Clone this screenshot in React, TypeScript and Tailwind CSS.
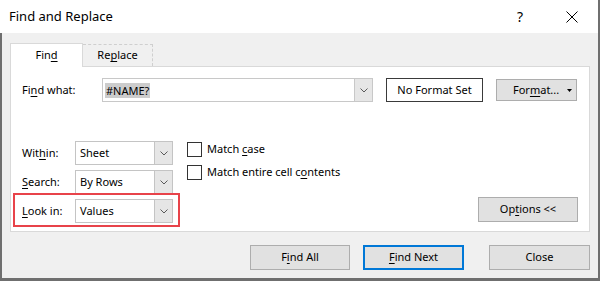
import React from "react";

const font = { fontFamily: '"Noto Sans", "Open Sans", sans-serif' };

function Chevron() {
  return (
    <svg width="8" height="5" viewBox="0 0 8 5" className="block">
      <polyline points="0.5,0.5 4,4 7.5,0.5" fill="none" stroke="#5a5a5a" strokeWidth="1" />
    </svg>
  );
}

function Select({ value, w }: { value: string; w: string }) {
  return (
    <div className={`flex h-[24px] ${w} border border-[#c4c4c4] bg-white`}>
      <div className="flex-1 flex items-center pl-[4px] text-[11px] text-black">{value}</div>
      <div className="w-[18px] flex items-center justify-center bg-[#e6e6e6] border-l border-[#c4c4c4]">
        <Chevron />
      </div>
    </div>
  );
}

function Btn({ children, w, focused }: { children: React.ReactNode; w: string; focused?: boolean }) {
  return (
    <div
      className={`h-[25px] ${w} flex items-center justify-center bg-[#e1e1e1] text-[11px] text-black ${
        focused ? "border-2 border-[#0078d7]" : "border border-[#adadad]"
      }`}
    >
      {children}
    </div>
  );
}

function U({ children }: { children: React.ReactNode }) {
  return <span className="underline underline-offset-2 decoration-1">{children}</span>;
}

export default function App() {
  return (
    <div
      style={font}
      className="w-[600px] h-[281px] flex flex-col border-r-2 border-b-[3px] border-[#6f6f6f] bg-[#f0f0f0] text-black"
    >
      {/* title bar */}
      <div className="h-[33px] bg-white flex items-center justify-between pl-[9px] pr-[20px]">
        <span className="text-[13px] leading-none">Find and Replace</span>
        <div className="flex items-center gap-[43px]">
          <span className="text-[14px] leading-none">?</span>
          <svg width="12" height="12" viewBox="0 0 12 12">
            <line x1="0.5" y1="0.5" x2="11.5" y2="11.5" stroke="#000" strokeWidth="1" />
            <line x1="11.5" y1="0.5" x2="0.5" y2="11.5" stroke="#000" strokeWidth="1" />
          </svg>
        </div>
      </div>

      {/* body */}
      <div className="flex-1 border-l-2 border-[#6f6f6f] pl-[8px] pr-[8px] pt-[10px] flex flex-col">
        {/* tabs */}
        <div className="flex items-end h-[23px]">
          <div className="relative z-10 w-[73px] h-[24px] -mb-px bg-white border-l border-t border-r border-[#d9d9d9] flex items-center justify-center text-[11px]">
            Fin<U>d</U>
          </div>
          <div className="w-[70px] h-[22px] border-t border-r border-dashed border-[#cfcfcf] flex items-center justify-center text-[11px]">
            Re<U>p</U>lace
          </div>
        </div>

        {/* panel */}
        <div className="h-[166px] bg-white border border-[#d9d9d9] px-[11px] pt-[11px] flex flex-col">
          {/* find what */}
          <div className="flex items-center h-[24px]">
            <div className="w-[80px] text-[11px]">
              Fi<U>n</U>d what:
            </div>
            <div className="flex h-[24px] w-[271px] border border-[#c8c8c8] bg-white">
              <div className="flex-1 flex items-center pl-[2px]">
                <span className="bg-[#cccccc] text-[11px] px-px leading-[15px]">#NAME?</span>
              </div>
              <div className="w-[18px] flex items-center justify-center bg-[#e6e6e6] border-l border-[#c8c8c8]">
                <Chevron />
              </div>
            </div>
            <div className="ml-[13px] w-[97px] h-[24px] border border-[#3a3a3a] flex items-center justify-center text-[11px]">
              No Format Set
            </div>
            <div className="ml-[13px] w-[81px] h-[22px] bg-[#e1e1e1] border border-[#adadad] flex items-center text-[11px] pl-[16px] pr-[4px]">
              <span>
                For<U>m</U>at...
              </span>
              <svg width="5" height="3" viewBox="0 0 5 3" className="ml-auto">
                <polygon points="0,0 5,0 2.5,3" fill="#000" />
              </svg>
            </div>
          </div>

          {/* options section */}
          <div className="mt-[39px] flex items-start">
            <div className="flex flex-col gap-[5px]">
              <div className="flex items-center">
                <div className="w-[53px] text-[11px]">
                  Wit<U>h</U>in:
                </div>
                <Select value="Sheet" w="w-[98px]" />
              </div>
              <div className="flex items-center">
                <div className="w-[53px] text-[11px]">
                  <U>S</U>earch:
                </div>
                <Select value="By Rows" w="w-[98px]" />
              </div>
              <div className="relative flex items-center">
                <div className="absolute left-[-9px] right-[-7px] top-[-6px] bottom-[-4px] border-2 border-[#e8434a]" />
                <div className="w-[53px] text-[11px]">
                  <U>L</U>ook in:
                </div>
                <Select value="Values" w="w-[98px]" />
              </div>
            </div>

            <div className="ml-[14px] pt-[1px] flex flex-col gap-[8px]">
              <div className="flex items-center h-[15px]">
                <div className="w-[15px] h-[15px] border border-[#333333] bg-white" />
                <span className="ml-[5px] text-[11px]">
                  Match <U>c</U>ase
                </span>
              </div>
              <div className="flex items-center h-[15px]">
                <div className="w-[15px] h-[15px] border border-[#333333] bg-white" />
                <span className="ml-[5px] text-[11px]">
                  Match entire cell c<U>o</U>ntents
                </span>
              </div>
            </div>

            <div className="ml-auto self-end mb-[1px]">
              <Btn w="w-[100px]">
                <span>
                  Op<U>t</U>ions &lt;&lt;
                </span>
              </Btn>
            </div>
          </div>
        </div>

        {/* bottom buttons */}
        <div className="mt-[13px] flex justify-end">
          <Btn w="w-[100px]">
            <span>
              F<U>i</U>nd All
            </span>
          </Btn>
          <div className="ml-[13px]">
            <Btn w="w-[101px]" focused>
              <span>
                <U>F</U>ind Next
              </span>
            </Btn>
          </div>
          <div className="ml-[25px]">
            <Btn w="w-[101px]">Close</Btn>
          </div>
        </div>
      </div>
    </div>
  );
}
